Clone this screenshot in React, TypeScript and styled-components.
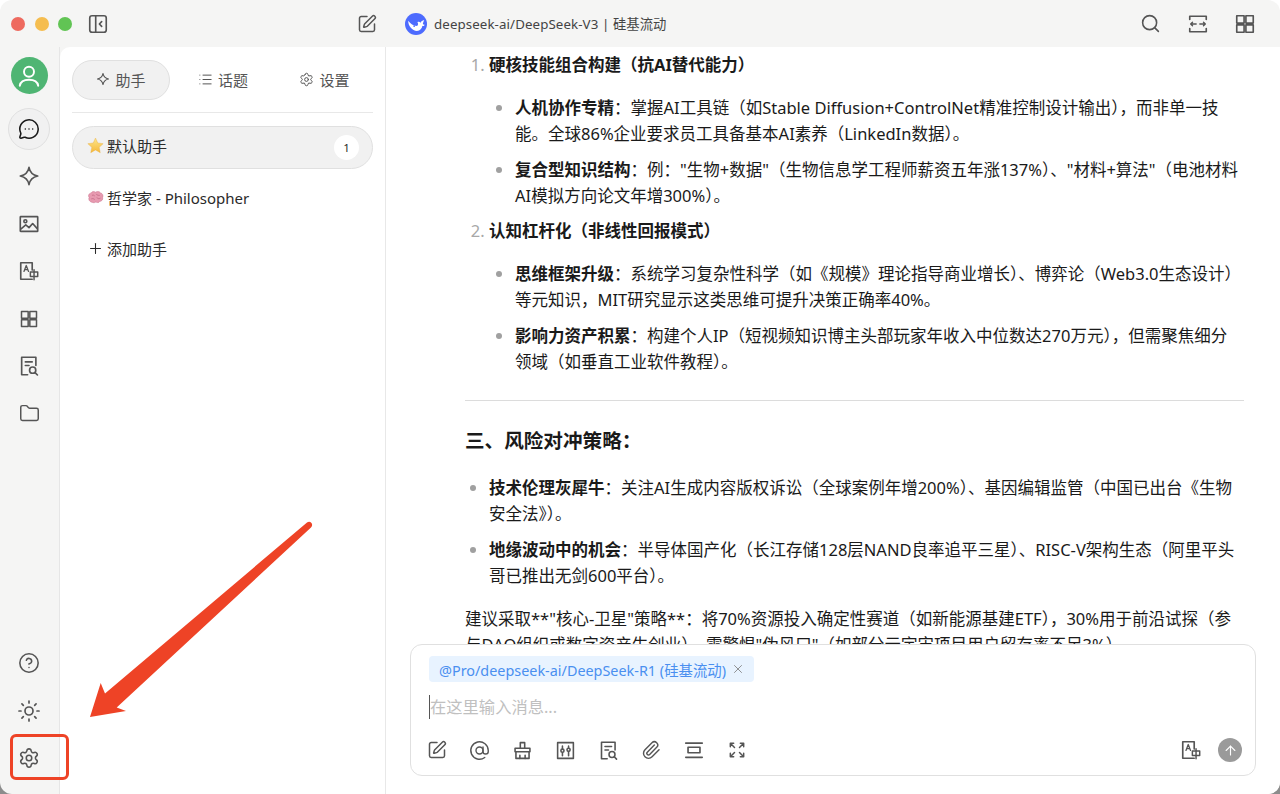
import React from "react";
import styled, { createGlobalStyle } from "styled-components";
import {
  AtSign,
  CircleHelp,
  Folder,
  List,
  MessageCircleMore,
  Paperclip,
  Plus,
  Search,
  Settings,
  SquarePen,
  Sun,
  X,
  ArrowUp,
} from "lucide-react";

const GlobalStyle = createGlobalStyle`
  html, body {
    margin: 0;
    padding: 0;
    background: #ffffff;
  }
  body {
    font-family: "Noto Sans", "Noto Sans CJK SC", sans-serif;
    color: #1a1a1a;
  }
`;

const Page = styled.div`
  position: relative;
  width: 1280px;
  height: 794px;
  overflow: hidden;
  background: linear-gradient(to bottom, #ffffff 95%, #8c8c8c 95%);
`;

const Window = styled.div`
  display: flex;
  flex-direction: column;
  width: 100%;
  height: 100%;
  background: #f5f5f4;
  border-radius: 12px;
  overflow: hidden;
`;

const TitleBar = styled.div`
  display: flex;
  align-items: center;
  height: 47px;
  flex-shrink: 0;
  padding-left: 11px;
  padding-right: 24px;
  color: #555555;
`;

const TrafficLights = styled.div`
  display: flex;
  gap: 9.5px;
  margin-right: 15px;
`;

const Light = styled.span<{ $color: string }>`
  width: 14px;
  height: 14px;
  border-radius: 50%;
  background: ${(props) => props.$color};
`;

const TitleLeft = styled.div`
  display: flex;
  align-items: center;
  width: 290px;
  justify-content: space-between;
  margin-right: 28px;
`;

const TitleText = styled.span`
  margin-left: 7px;
  font-size: 13.3px;
  color: #444444;
  letter-spacing: 0.1px;
`;

const TitleRight = styled.div`
  margin-left: auto;
  display: flex;
  align-items: center;
  gap: 25.5px;
`;

const Body = styled.div`
  flex: 1;
  display: flex;
  min-height: 0;
`;

const Sidebar = styled.nav`
  width: 60px;
  flex-shrink: 0;
  display: flex;
  flex-direction: column;
  justify-content: space-between;
  align-items: center;
  padding: 10px 1px 12px 0;
  box-sizing: border-box;
  border-right: 1px solid #e6e6e6;
  color: #555555;
`;

const NavGroup = styled.div`
  display: flex;
  flex-direction: column;
  align-items: center;
`;

const Avatar = styled.div`
  width: 37px;
  height: 37px;
  border-radius: 50%;
  background: #4fb573;
  color: #ffffff;
  display: flex;
  align-items: center;
  justify-content: center;
  margin-bottom: 11px;
`;

const NavItem = styled.div<{ $active?: boolean }>`
  width: 42px;
  height: 42px;
  margin: 2.75px 0;
  display: flex;
  align-items: center;
  justify-content: center;
  border-radius: 50%;
  box-sizing: border-box;
  color: ${(props) => (props.$active ? "#1a1a1a" : "#555555")};
  background: ${(props) => (props.$active ? "#f1f1f1" : "transparent")};
  border: 1px solid ${(props) => (props.$active ? "#e0e0e0" : "transparent")};
`;

const AssistantPanel = styled.aside`
  width: 326px;
  flex-shrink: 0;
  box-sizing: border-box;
  background: #ffffff;
  border-top-left-radius: 10px;
  border-right: 1px solid #e8e8e8;
  padding: 13px 12px 0 12px;
`;

const Tabs = styled.div`
  display: flex;
  align-items: center;
  height: 40px;
  padding-bottom: 12px;
  border-bottom: 1px solid #e8e8e8;
`;

const Tab = styled.div<{ $active?: boolean; $width: number }>`
  width: ${(props) => props.$width}px;
  height: 40px;
  box-sizing: border-box;
  display: flex;
  align-items: center;
  justify-content: center;
  gap: 5px;
  padding-bottom: 2px;
  font-size: 15px;
  color: #555555;
  border-radius: 20px;
  background: ${(props) => (props.$active ? "#f1f1f1" : "transparent")};
  border: 1px solid ${(props) => (props.$active ? "#e0e0e0" : "transparent")};
`;

const AssistantList = styled.div`
  display: flex;
  flex-direction: column;
  margin-top: 13px;
  gap: 8.5px;
`;

const AssistantRow = styled.div<{ $active?: boolean }>`
  height: 43px;
  box-sizing: border-box;
  display: flex;
  align-items: center;
  gap: 3px;
  padding: 0 13px 4px 14px;
  font-size: 15px;
  color: #2a2a2a;
  border-radius: 22px;
  background: ${(props) => (props.$active ? "#f1f1f1" : "transparent")};
  border: 1px solid ${(props) => (props.$active ? "#e0e0e0" : "transparent")};
`;

const Badge = styled.span`
  margin-left: auto;
  margin-bottom: -3px;
  width: 25px;
  height: 25px;
  border-radius: 50%;
  background: #ffffff;
  font-size: 11.5px;
  display: flex;
  align-items: center;
  justify-content: center;
`;

const Main = styled.main`
  flex: 1;
  min-width: 0;
  display: flex;
  flex-direction: column;
  background: #ffffff;
`;

const Messages = styled.div`
  flex: 1;
  min-height: 0;
  overflow: hidden;
  box-sizing: border-box;
  padding: 5px 36px 0 79px;
  font-size: 16.5px;
  line-height: 26px;
  color: #1a1a1a;
  white-space: nowrap;
`;

const OrderedList = styled.ol`
  margin: 0;
  padding-left: 24px;
  & > li {
    margin-bottom: 9px;
  }
  & > li::marker {
    color: #a8a8a8;
  }
`;

const BulletList = styled.ul<{ $indent: number; $top: number }>`
  margin: ${(props) => props.$top}px 0 0 0;
  padding-left: ${(props) => props.$indent}px;
  list-style-type: disc;
  & > li {
    margin-bottom: 10px;
  }
  & > li:last-child {
    margin-bottom: 0;
  }
  & > li::marker {
    color: #a0a0a0;
  }
`;

const Divider = styled.hr`
  border: none;
  border-top: 1px solid #dcdcdc;
  margin: 25px 0 0 0;
`;

const SectionTitle = styled.h3`
  font-size: 19.6px;
  line-height: 30px;
  font-weight: 700;
  margin: 25px 0 0 0;
`;

const Paragraph = styled.p`
  margin: 17px 0 0 0;
`;

const InputBox = styled.div`
  flex-shrink: 0;
  height: 132px;
  margin: 0 24px 18px 24px;
  box-sizing: border-box;
  border: 1px solid #e0e0e0;
  border-radius: 12px;
  background: #ffffff;
  padding: 11px 13px 0 18px;
  display: flex;
  flex-direction: column;
  align-items: flex-start;
`;

const ModelTag = styled.div`
  display: flex;
  align-items: center;
  height: 26px;
  padding: 0 9px 0 10px;
  gap: 5px;
  border-radius: 4px;
  background: #e8f3ff;
  color: #4a8ff0;
  font-size: 14.4px;
  white-space: nowrap;
`;

const Placeholder = styled.div`
  margin-top: 13px;
  height: 24px;
  display: flex;
  align-items: center;
  font-size: 16.3px;
  color: #c0c0c0;
  border-left: 1px solid #555555;
  line-height: 20px;
`;

const Toolbar = styled.div`
  margin-top: 19px;
  margin-left: -2px;
  width: calc(100% + 2px);
  display: flex;
  align-items: center;
  gap: 22px;
  color: #555555;
`;

const SendButton = styled.div`
  width: 24px;
  height: 24px;
  border-radius: 50%;
  background: #9a9a9a;
  color: #ffffff;
  display: flex;
  align-items: center;
  justify-content: center;
`;

const ToolbarEnd = styled.div`
  margin-left: auto;
  display: flex;
  align-items: center;
  gap: 16px;
`;

const HighlightBox = styled.div`
  position: absolute;
  left: 10px;
  top: 734px;
  width: 59px;
  height: 46px;
  box-sizing: border-box;
  border: 3px solid #ee4326;
  border-radius: 6px;
`;

const ArrowMark = styled.svg`
  position: absolute;
  left: 0;
  top: 0;
  pointer-events: none;
`;

type IconProps = { size?: number };

const Stroke = ({ size = 20, children }: IconProps & { children: React.ReactNode }) => (
  <svg
    width={size}
    height={size}
    viewBox="0 0 24 24"
    fill="none"
    stroke="currentColor"
    strokeWidth={1.8}
    strokeLinecap="round"
    strokeLinejoin="round"
  >
    {children}
  </svg>
);

const SparkIcon = ({ size = 22 }: IconProps) => (
  <Stroke size={size}>
    <path d="M12 2.5C13 8 16 11 21.5 12 16 13 13 16 12 21.5 11 16 8 13 2.5 12 8 11 11 8 12 2.5Z" />
  </Stroke>
);

const ImageIcon = () => (
  <Stroke size={22}>
    <rect x="2.5" y="4" width="19" height="16" rx="0.5" />
    <circle cx="8" cy="9" r="1.6" />
    <path d="M3 17.5l5.5-4.5 3.5 3 4-4.500 5 5.500" />
  </Stroke>
);

const TranslateIcon = ({ size = 22 }: IconProps) => (
  <Stroke size={size}>
    <path d="M15.5 11V3H3v18h12.500" />
    <path d="M6.500 12.500 9 6l2.500 6.500M7.400 10.500h3.200" strokeWidth={1.4} />
    <rect x="13.500" y="13" width="8" height="5" strokeWidth={1.6} />
    <path d="M17.500 10.500v11" strokeWidth={1.6} />
  </Stroke>
);

const GridIcon = ({ size = 20 }: IconProps) => (
  <Stroke size={size}>
    <rect x="3" y="3" width="8" height="8" />
    <rect x="13" y="3" width="8" height="8" />
    <rect x="3" y="13" width="8" height="8" />
    <rect x="13" y="13" width="8" height="8" />
  </Stroke>
);

const NoteSearchIcon = ({ size = 22 }: IconProps) => (
  <Stroke size={size}>
    <path d="M10.500 21.500H4V2.500h15.500v9" />
    <path d="M8 7.500h7.500M8 11.500h4" />
    <circle cx="16" cy="16.500" r="3.400" />
    <path d="M18.600 19.200l2.600 2.600" />
  </Stroke>
);

const PanelIcon = () => (
  <Stroke size={22}>
    <rect x="3" y="3" width="18" height="18" rx="2.500" />
    <path d="M9.500 3v18" />
    <path d="M16 9.500 13.500 12l2.500 2.500" />
  </Stroke>
);

const FitWidthIcon = () => (
  <Stroke size={22}>
    <path d="M3 7V3.500h18V7M3 17v3.500h18V17" />
    <path d="M4 12h6M4 12l2-2M4 12l2 2M20 12h-6M20 12l-2-2M20 12l-2 2" strokeWidth={1.5} />
  </Stroke>
);

const BroomIcon = () => (
  <Stroke size={21}>
    <path d="M9.500 9V3h5v6" />
    <path d="M3.500 9.500h17v4h-17z" />
    <path d="M4.500 13.500v7.500h15v-7.500" />
    <path d="M9 21v-3.500M15 21v-3.500" />
  </Stroke>
);

const SlidersIcon = () => (
  <Stroke size={21}>
    <rect x="3" y="3" width="18" height="18" />
    <path d="M8.500 7v3M8.500 14.500V18M15.500 7v2M15.500 13.500V18" />
    <circle cx="8.500" cy="12.200" r="1.800" />
    <circle cx="15.500" cy="11.200" r="1.800" />
  </Stroke>
);

const RowsIcon = () => (
  <Stroke size={22}>
    <path d="M3 4.500h18M3 20h18" />
    <rect x="5.500" y="9" width="13" height="6" />
  </Stroke>
);

const ExpandIcon = () => (
  <Stroke size={20}>
    <path d="M4 4l5 5M4 4h4M4 4v4" />
    <path d="M20 4l-5 5M20 4h-4M20 4v4" />
    <path d="M4 20l5-5M4 20h4M4 20v-4" />
    <path d="M20 20l-5-5M20 20h-4M20 20v-4" />
  </Stroke>
);

const UserIcon = () => (
  <Stroke size={26}>
    <circle cx="12" cy="8" r="4.600" />
    <path d="M3.500 21c.6-3.800 3.400-5.500 8.500-5.500s7.900 1.700 8.500 5.500" />
  </Stroke>
);

const StarEmoji = () => (
  <svg width="17" height="17" viewBox="0 0 24 24">
    <defs>
      <linearGradient id="star" x1="0" y1="0" x2="0" y2="1">
        <stop offset="0" stopColor="#fde68a" />
        <stop offset="1" stopColor="#f5b83a" />
      </linearGradient>
    </defs>
    <path
      d="M12 1.500l3.200 7 7.600.9-5.600 5.200 1.500 7.500L12 18.300l-6.700 3.800 1.500-7.500L1.200 9.400l7.600-.9z"
      fill="url(#star)"
      stroke="#eab045"
      strokeWidth="0.6"
      strokeLinejoin="round"
    />
  </svg>
);

const BrainEmoji = () => (
  <svg width="17" height="17" viewBox="0 0 24 24">
    <path
      d="M3 12c-2-3 0-6 3-6.500C7 3.500 10 3 12 4.500c2-1.500 6-1 7 1 3 .5 4.500 4 3 6.500 1 3-1.500 5.500-4 5.500-1 2-4 2-5.500 1-2 1-3 1-4.500.5C4 18.500 1.500 15 3 12z"
      fill="#e79ab0"
      stroke="#c9708c"
      strokeWidth="0.7"
    />
    <path d="M7 9c2-1 3 0 4 1M13 7c1 2 3 2 5 2M6 14c2-1 4 0 5 1M14 12c1 2 3 2 5 1" stroke="#b85f7c" strokeWidth="0.9" fill="none" />
  </svg>
);

const WhaleLogo = () => (
  <svg width="22" height="22" viewBox="0 0 24 24">
    <circle cx="12" cy="12" r="12" fill="#4d6bfe" />
    <path
      d="M3.500 8.500C3.500 14.500 8 19.500 13 19.500c3.500 0 5.500-2.500 6-5.500 1 .5 2 0 2.500-1.500-1 .5-2 0-2-1 .3-1.500 1-3 1.500-4-2 .5-3.500 1.500-4 3-1-1-2.500-1-3.500-.5 1 1 1 3 0 4-3.500.500-7.500-2-10-5.500z"
      fill="#ffffff"
    />
    <circle cx="10" cy="14.300" r="1" fill="#4d6bfe" />
  </svg>
);

const App = () => {
  return (
    <Page>
      <GlobalStyle />
      <Window>
        <TitleBar>
          <TrafficLights>
            <Light $color="#ee6a5f" />
            <Light $color="#f5bd4f" />
            <Light $color="#61c454" />
          </TrafficLights>
          <TitleLeft>
            <PanelIcon />
            <SquarePen size={20} strokeWidth={1.8} />
          </TitleLeft>
          <WhaleLogo />
          <TitleText>deepseek-ai/DeepSeek-V3 | 硅基流动</TitleText>
          <TitleRight>
            <Search size={21} strokeWidth={1.8} />
            <FitWidthIcon />
            <GridIcon size={22} />
          </TitleRight>
        </TitleBar>
        <Body>
          <Sidebar>
            <NavGroup>
              <Avatar>
                <UserIcon />
              </Avatar>
              <NavItem $active>
                <MessageCircleMore size={22} strokeWidth={1.7} />
              </NavItem>
              <NavItem>
                <SparkIcon />
              </NavItem>
              <NavItem>
                <ImageIcon />
              </NavItem>
              <NavItem>
                <TranslateIcon />
              </NavItem>
              <NavItem>
                <GridIcon />
              </NavItem>
              <NavItem>
                <NoteSearchIcon />
              </NavItem>
              <NavItem>
                <Folder size={21} strokeWidth={1.7} />
              </NavItem>
            </NavGroup>
            <NavGroup>
              <NavItem>
                <CircleHelp size={22} strokeWidth={1.7} />
              </NavItem>
              <NavItem>
                <Sun size={24} strokeWidth={1.7} />
              </NavItem>
              <NavItem>
                <Settings size={22} strokeWidth={1.7} />
              </NavItem>
            </NavGroup>
          </Sidebar>
          <AssistantPanel>
            <Tabs>
              <Tab $active $width={98}>
                <SparkIcon size={14} />
                助手
              </Tab>
              <Tab $width={106}>
                <List size={15} strokeWidth={1.6} />
                话题
              </Tab>
              <Tab $width={97}>
                <Settings size={15} strokeWidth={1.6} />
                设置
              </Tab>
            </Tabs>
            <AssistantList>
              <AssistantRow $active>
                <StarEmoji />
                默认助手
                <Badge>1</Badge>
              </AssistantRow>
              <AssistantRow>
                <BrainEmoji />
                哲学家 - Philosopher
              </AssistantRow>
              <AssistantRow>
                <Plus size={17} strokeWidth={1.5} />
                添加助手
              </AssistantRow>
            </AssistantList>
          </AssistantPanel>
          <Main>
            <Messages>
              <OrderedList>
                <li>
                  <strong>硬核技能组合构建（抗AI替代能力）</strong>
                  <BulletList $indent={26} $top={17}>
                    <li>
                      <strong>人机协作专精</strong>：掌握AI工具链（如Stable Diffusion+ControlNet精准控制设计输出），而非单一技
                      <br />
                      能。全球86%企业要求员工具备基本AI素养（LinkedIn数据）。
                    </li>
                    <li>
                      <strong>复合型知识结构</strong>：例："生物+数据"（生物信息学工程师薪资五年涨137%）、"材料+算法"（电池材料
                      <br />
                      AI模拟方向论文年增300%）。
                    </li>
                  </BulletList>
                </li>
                <li>
                  <strong>认知杠杆化（非线性回报模式）</strong>
                  <BulletList $indent={26} $top={17}>
                    <li>
                      <strong>思维框架升级</strong>：系统学习复杂性科学（如《规模》理论指导商业增长）、博弈论（Web3.0生态设计）
                      <br />
                      等元知识，MIT研究显示这类思维可提升决策正确率40%。
                    </li>
                    <li>
                      <strong>影响力资产积累</strong>：构建个人IP（短视频知识博主头部玩家年收入中位数达270万元），但需聚焦细分
                      <br />
                      领域（如垂直工业软件教程）。
                    </li>
                  </BulletList>
                </li>
              </OrderedList>
              <Divider />
              <SectionTitle>三、风险对冲策略：</SectionTitle>
              <BulletList $indent={24} $top={19}>
                <li>
                  <strong>技术伦理灰犀牛</strong>：关注AI生成内容版权诉讼（全球案例年增200%）、基因编辑监管（中国已出台《生物
                  <br />
                  安全法》）。
                </li>
                <li>
                  <strong>地缘波动中的机会</strong>：半导体国产化（长江存储128层NAND良率追平三星）、RISC-V架构生态（阿里平头
                  <br />
                  哥已推出无剑600平台）。
                </li>
              </BulletList>
              <Paragraph>
                建议采取**"核心-卫星"策略**：将70%资源投入确定性赛道（如新能源基建ETF），30%用于前沿试探（参
                <br />
                与DAO组织或数字资产生创业），需警惕"伪风口"（如部分元宇宙项目用户留存率不足3%）。
              </Paragraph>
            </Messages>
            <InputBox>
              <ModelTag>
                @Pro/deepseek-ai/DeepSeek-R1 (硅基流动)
                <X size={14} strokeWidth={1.4} color="#7a7a7a" />
              </ModelTag>
              <Placeholder>在这里输入消息...</Placeholder>
              <Toolbar>
                <SquarePen size={20} strokeWidth={1.8} />
                <AtSign size={21} strokeWidth={1.6} />
                <BroomIcon />
                <SlidersIcon />
                <NoteSearchIcon size={21} />
                <Paperclip size={20} strokeWidth={1.7} />
                <RowsIcon />
                <ExpandIcon />
                <ToolbarEnd>
                  <TranslateIcon />
                  <SendButton>
                    <ArrowUp size={15} strokeWidth={1.8} />
                  </SendButton>
                </ToolbarEnd>
              </Toolbar>
            </InputBox>
          </Main>
        </Body>
      </Window>
      <HighlightBox />
      <ArrowMark width="1280" height="794" viewBox="0 0 1280 794">
        <path
          d="M90 717 100.700 683 105 693.500 307 522.500Q309.500 521 311.500 523 313 525.500 311 527.500L116.700 707.500 126 711Z"
          fill="#ee4326"
        />
      </ArrowMark>
    </Page>
  );
};

export default App;
